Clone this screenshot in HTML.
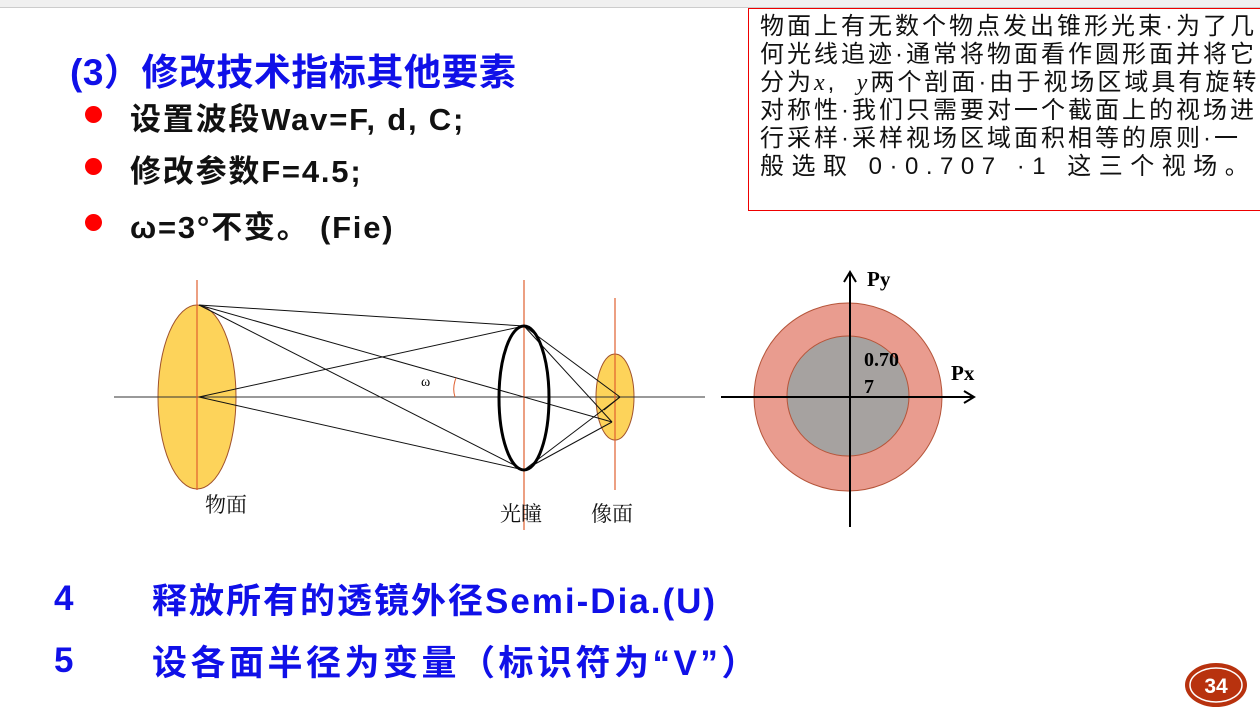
<!DOCTYPE html>
<html><head><meta charset="utf-8"><style>
html,body{margin:0;padding:0;width:1260px;height:718px;overflow:hidden;background:#fff;position:relative}
.t{position:absolute;white-space:nowrap;font-family:"Liberation Sans","Noto Sans CJK SC",sans-serif;font-weight:bold}
.blue{color:#1010e8}
.dot{position:absolute;width:17px;height:17px;border-radius:50%;background:#f00}
.box{position:absolute;left:748px;top:8px;width:520px;height:203px;border:1.5px solid #e00;box-sizing:border-box;overflow:hidden}
.box div{position:absolute;left:11px;white-space:nowrap;font-family:"Liberation Sans","Noto Sans CJK SC",sans-serif;font-size:24px;letter-spacing:3px;line-height:28px;color:#111}
</style></head><body>
<div style="position:absolute;left:0;top:0;width:1260px;height:7px;background:#f0f0f0;border-bottom:1px solid #ccc"></div>

<div class="t blue" style="left:70px;top:42px;font-size:37px;letter-spacing:0.5px">(3）修改技术指标其他要素</div>
<div class="dot" style="left:85px;top:106px"></div>
<div class="dot" style="left:85px;top:158px"></div>
<div class="dot" style="left:85px;top:214px"></div>
<div class="t" style="left:130px;top:94px;font-size:31px;letter-spacing:1.8px;color:#111">设置波段Wav=F, d, C;</div>
<div class="t" style="left:130px;top:146px;font-size:31px;letter-spacing:1.8px;color:#111">修改参数F=4.5;</div>
<div class="t" style="left:130px;top:202px;font-size:31px;letter-spacing:1.8px;color:#111">ω=3°不变。 (Fie)</div>

<div class="box">
<div style="top:4px">物面上有无数个物点发出锥形光束·为了几</div>
<div style="top:32px">何光线追迹·通常将物面看作圆形面并将它</div>
<div style="top:60px">分为<i style="font-family:'Liberation Serif',serif">x</i>, &nbsp;<i style="font-family:'Liberation Serif',serif">y</i>两个剖面·由于视场区域具有旋转</div>
<div style="top:88px">对称性·我们只需要对一个截面上的视场进</div>
<div style="top:116px">行采样·采样视场区域面积相等的原则·一</div>
<div style="top:144px;letter-spacing:7.5px">般选取 0·0.707 ·1 这三个视场。</div>
</div>

<svg style="position:absolute;left:0;top:0" width="1260" height="718">
<g stroke="#a0522d" stroke-width="1" fill="#fdd35a">
<ellipse cx="197" cy="397" rx="39" ry="92"/>
<ellipse cx="615" cy="397" rx="19" ry="43"/>
</g>
<line x1="114" y1="397" x2="705" y2="397" stroke="#333" stroke-width="1"/>
<g stroke="#e06030" stroke-width="1.2">
<line x1="197" y1="280" x2="197" y2="490"/>
<line x1="524" y1="280" x2="524" y2="530"/>
<line x1="615" y1="298" x2="615" y2="490"/>
</g>
<g stroke="#111" stroke-width="1" fill="none">
<line x1="199" y1="305" x2="524" y2="326"/>
<line x1="199" y1="305" x2="524" y2="470"/>
<line x1="199" y1="305" x2="612" y2="422"/>
<line x1="199" y1="397" x2="524" y2="326"/>
<line x1="199" y1="397" x2="524" y2="470"/>
<line x1="524" y1="326" x2="620" y2="397"/>
<line x1="524" y1="326" x2="612" y2="422"/>
<line x1="524" y1="470" x2="620" y2="397"/>
<line x1="524" y1="470" x2="612" y2="422"/>
<line x1="620" y1="397" x2="604" y2="410"/>
</g>
<ellipse cx="524" cy="398" rx="25" ry="72" fill="none" stroke="#000" stroke-width="3"/>
<path d="M456 378 Q452 388 455 397" fill="none" stroke="#e06030" stroke-width="1"/>
<text x="421" y="386" font-family="Liberation Serif,serif" font-size="14">ω</text>
<g font-family="Liberation Serif,'Noto Serif CJK SC',serif" font-size="21" fill="#111">
<text x="205" y="512">物面</text>
<text x="500" y="521">光瞳</text>
<text x="591" y="521">像面</text>
</g>

<circle cx="848" cy="397" r="94" fill="#e99c8f" stroke="#b5553a" stroke-width="1"/>
<ellipse cx="848" cy="396" rx="61" ry="60" fill="#a6a2a0" stroke="#b5553a" stroke-width="1"/>
<g stroke="#000" stroke-width="2" fill="none">
<line x1="721" y1="397" x2="973" y2="397"/>
<path d="M964 391 L974 397 L964 403"/>
<line x1="850" y1="527" x2="850" y2="272"/>
<path d="M844 282 L850 272 L856 282"/>
</g>
<g font-family="Liberation Serif,serif" font-weight="bold" fill="#000">
<text x="867" y="286" font-size="21">Py</text>
<text x="951" y="380" font-size="21">Px</text>
<text x="864" y="366" font-size="20">0.70</text>
<text x="864" y="393" font-size="20">7</text>
</g>

<ellipse cx="1216" cy="685" rx="31" ry="22" fill="#b8320e"/>
<ellipse cx="1216" cy="685" rx="26" ry="17" fill="none" stroke="#fff" stroke-width="1.5"/>
<text x="1216" y="693" text-anchor="middle" font-family="Liberation Sans,sans-serif" font-weight="bold" font-size="21" fill="#fff">34</text>
</svg>

<div class="t blue" style="left:54px;top:579px;font-size:35px">4</div>
<div class="t blue" style="left:152px;top:573px;font-size:35px;letter-spacing:2px">释放所有的透镜外径Semi-Dia.(U)</div>
<div class="t blue" style="left:54px;top:641px;font-size:35px">5</div>
<div class="t blue" style="left:152px;top:635px;font-size:35px;letter-spacing:3.5px">设各面半径为变量（标识符为“V”）</div>
</body></html>
